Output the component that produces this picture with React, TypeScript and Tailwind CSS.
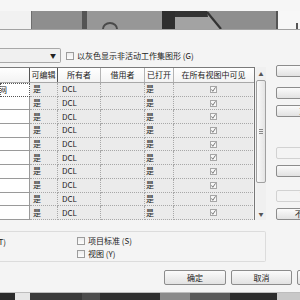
import React from 'react';

const rows = Array.from({ length: 10 }, (_, i) => i);

const headers = ['', '可编辑', '所有者', '借用者', '已打开', '在所有视图中可见'];

const rightButtons = [
  { label: '新建(N)', disabled: false, gap: 'mt-0' },
  { label: '删除(D)', disabled: false, gap: 'mt-[10px]' },
  { label: '重命名(R)', disabled: false, gap: 'mt-[6px]' },
  { label: '打开(O)', disabled: true, gap: 'mt-[30px]' },
  { label: '关闭(C)', disabled: false, gap: 'mt-[6px]' },
  { label: '可编辑(E)', disabled: true, gap: 'mt-[13px]' },
  { label: '不可编辑(O)', disabled: false, gap: 'mt-[6px]' },
];

function Btn({ label, disabled, className }: { label: string; disabled?: boolean; className?: string }) {
  return (
    <div
      className={`flex shrink-0 items-center justify-center rounded-[2px] border ${
        disabled
          ? 'border-[#d2d2d2] bg-[#f4f4f4] text-[#b8b8b8]'
          : 'border-[#8c8c8c] bg-gradient-to-b from-[#fbfbfb] to-[#e2e2e2] text-[#222]'
      } ${className}`}
    >
      {label}
    </div>
  );
}

function Box() {
  return <div className="w-[8px] h-[8px] shrink-0 border border-[#9c9c9c] bg-gradient-to-b from-[#ececec] to-[#fdfdfd]" />;
}

function Check() {
  return (
    <div className="w-[7px] h-[7px] border border-[#a6a6a6] bg-[#f7f7f7] flex items-center justify-center">
      <svg width="5" height="5" viewBox="0 0 5 5">
        <path d="M0.5 2.4 L1.8 4.3 L4.5 0.3" stroke="#6a6a6a" strokeWidth="0.9" fill="none" />
      </svg>
    </div>
  );
}

function TopBand() {
  return (
    <div className="h-[30px] shrink-0 flex flex-col bg-[#f6f6f6]">
      <div className="h-[11px]" />
      <div className="h-[18px] flex">
        <div className="w-[31px] bg-[#f1f1f1]" />
        <svg width="247" height="18" viewBox="0 0 247 18" className="shrink-0">
          <rect width="247" height="18" fill="#8e8e8e" />
          <rect x="0" width="1" height="18" fill="#6e6e6e" />
          <rect x="51" width="5" height="18" fill="#545454" />
          <rect x="56" width="75" height="18" fill="#979797" />
          <path d="M72 18 A7 6 0 0 1 86 18" stroke="#4a4a4a" strokeWidth="2" fill="none" />
          <path d="M131 0 L176 0 L190 18 L131 18 Z" fill="#a3a3a3" />
          <path d="M131 0 L144 0 L144 18 L131 18 Z" fill="#2f2f2f" />
          <path d="M144 0 L176 0 L177 6 L144 6 Z" fill="#333" />
          <path d="M176 1 L190 18" stroke="#333" strokeWidth="2.2" />
          <rect x="245" width="2" height="18" fill="#555" />
        </svg>
        <div className="flex-1 bg-[#f7f7f7] flex items-end">
          <div className="ml-[18px] w-[2px] h-[6px] bg-[#555]" />
        </div>
      </div>
      <div className="h-[1px] bg-[#a2a2a2]" />
    </div>
  );
}

function Taskbar() {
  return (
    <div className="h-[8px] shrink-0 flex border-t border-[#bdbdbd]">
      <div className="w-[15px] bg-[#2b2b2b]" />
      <div className="w-[15px] bg-[#e6e6e6]" />
      <div className="w-[52px] bg-[#3a3a3a]" />
      <div className="w-[18px] bg-[#4c4c4c]" />
      <div className="w-[60px] bg-[#303030]" />
      <div className="w-[30px] bg-[#8a8a8a]" />
      <div className="w-[40px] bg-[#5a5a5a]" />
      <div className="w-[47px] bg-[#2d2d2d]" />
      <div className="w-[23px] bg-[#c8c8c8]" />
    </div>
  );
}

function Table() {
  return (
    <div className="mt-[4px] h-[153px] flex">
      <div className="w-[255px] flex flex-col border-r border-[#777]">
        <div className="grid grid-cols-[30px_28px_43px_44px_29px_79px] h-[16px] border-t border-b border-t-[#7a7a7a] border-b-[#a8a8a8] bg-gradient-to-b from-white to-[#f3f3f3]">
          {headers.map((h, i) => (
            <div
              key={i}
              className={`flex items-center justify-center whitespace-nowrap ${
                i === 0 || i === 1 ? 'border-r border-[#555]' : i < 5 ? 'border-r border-[#b4b4b4]' : ''
              }`}
            >
              {h}
            </div>
          ))}
        </div>
        {rows.map((r) => (
          <div key={r} className="grid grid-cols-[30px_28px_43px_44px_29px_79px] h-[13.7px]">
            <div
              className={`bg-white overflow-hidden flex items-center whitespace-nowrap ${
                r === 0 ? 'border border-dotted border-[#555]' : 'border-b border-r border-[#9a9a9a]'
              }`}
            >
              {r === 0 && <span className="ml-[-50px]">共享标高和轴网</span>}
            </div>
            <div className="bg-[#ebebeb] border-r border-b border-dotted border-[#a8a8a8] flex items-center pl-[3px]">是</div>
            <div className="bg-[#ebebeb] border-r border-b border-dotted border-[#a8a8a8] flex items-center pl-[4px]">DCL</div>
            <div className="bg-[#ebebeb] border-r border-b border-dotted border-[#a8a8a8]" />
            <div className="bg-[#ebebeb] border-r border-b border-dotted border-[#a8a8a8] flex items-center pl-[1px]">是</div>
            <div className="bg-[#ebebeb] border-b border-dotted border-[#a8a8a8] flex items-center justify-center">
              <Check />
            </div>
          </div>
        ))}
      </div>
      <div className="w-[10px] ml-[1px] flex flex-col bg-[#f0f0f0]">
        <div className="h-[13px] flex items-center justify-center text-[5px] text-[#555]">▲</div>
        <div className="h-[103px] rounded-[2px] border border-[#a0a0a0] bg-gradient-to-r from-[#fafafa] to-[#e4e4e4] flex items-center justify-center">
          <div className="flex flex-col gap-[1px]">
            <div className="w-[4px] h-[1px] bg-[#888]" />
            <div className="w-[4px] h-[1px] bg-[#888]" />
            <div className="w-[4px] h-[1px] bg-[#888]" />
          </div>
        </div>
        <div className="flex-1" />
        <div className="h-[13px] flex items-center justify-center text-[5px] text-[#555]">▼</div>
      </div>
    </div>
  );
}

export default function App() {
  return (
    <div className="w-[300px] h-[300px] overflow-hidden flex flex-col bg-[#f4f4f4] text-[#222] text-[8px] leading-none font-['Noto_Sans_CJK_SC',sans-serif]">
      <TopBand />
      <div className="h-[262px] shrink-0 flex flex-col">
        <div className="h-[232px] flex">
          <div className="w-[266px] shrink-0 flex flex-col">
            {/* toolbar */}
            <div className="mt-[18px] h-[15px] flex items-center">
              <div className="w-[61px] h-[15px] border border-l-0 border-[#a8a8a8] rounded-r-[2px] bg-[#f0f0f0] flex items-center justify-end pr-[4px]">
                <span className="text-[6px] text-[#222]">▼</span>
              </div>
              <div className="ml-[5px]">
                <Box />
              </div>
              <span className="ml-[3px] whitespace-nowrap">以灰色显示非活动工作集图形 (G)</span>
            </div>

            <Table />

            {/* group box */}
            <div className="mt-[11px] h-[31px] border border-l-0 border-[#dcdcdc] rounded-r-[2px] flex">
              <div className="w-[6px] overflow-hidden flex justify-end pt-[6px]">
                <span className="whitespace-nowrap">显示(T)</span>
              </div>
              <div className="ml-[71px] flex flex-col pt-[5px] gap-[5px]">
                <div className="flex items-center gap-[3px]">
                  <Box />
                  <span className="whitespace-nowrap">项目标准 (S)</span>
                </div>
                <div className="flex items-center gap-[3px]">
                  <Box />
                  <span className="whitespace-nowrap">视图 (Y)</span>
                </div>
              </div>
            </div>
          </div>

          <div className="ml-[10px] shrink-0 flex flex-col pt-[35px]">
            {rightButtons.map((b) => (
              <Btn key={b.label} label={b.label} disabled={b.disabled} className={`w-[81px] h-[12px] ${b.gap}`} />
            ))}
          </div>
        </div>

        <div className="mt-[8px] h-[15px] flex pl-[164px] gap-[5px]">
          <Btn label="确定" className="w-[62px] h-[15px]" />
          <Btn label="取消" className="w-[61px] h-[15px]" />
          <Btn label="帮助(H)" className="w-[62px] h-[15px]" />
        </div>
      </div>
      <Taskbar />
    </div>
  );
}
